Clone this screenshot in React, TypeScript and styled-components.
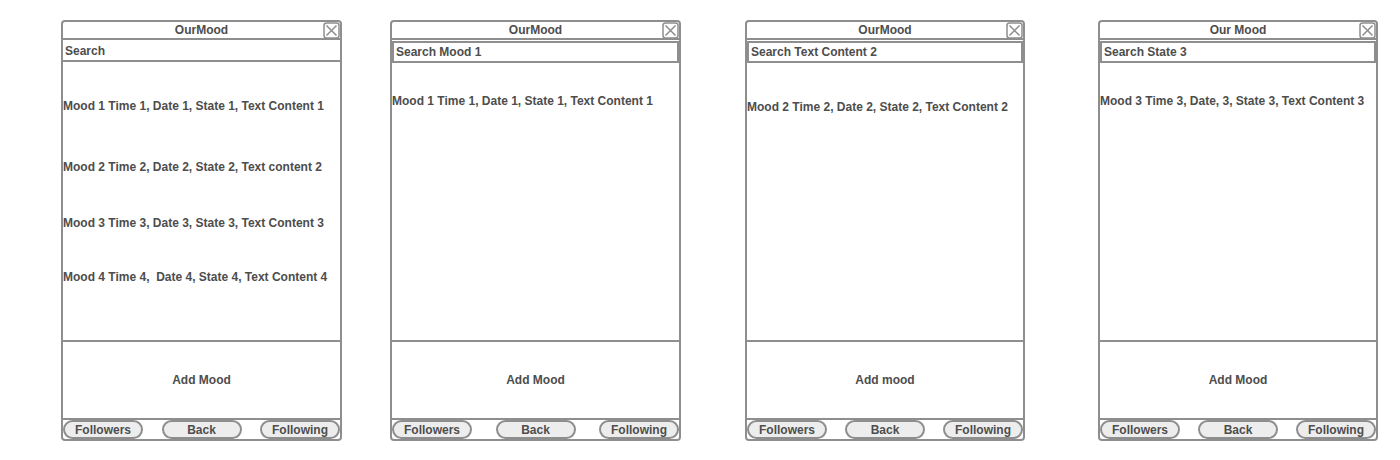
import React from "react";
import styled, { createGlobalStyle } from "styled-components";

const Global = createGlobalStyle`
  html, body { margin: 0; padding: 0; background: #ffffff; }
  body { font-family: "Liberation Sans", Arial, Helvetica, sans-serif; }
`;

const Stage = styled.div`
  display: flex;
  align-items: flex-start;
  padding-top: 20px;
  width: 1400px;
  height: 460px;
  box-sizing: border-box;
`;

const Panel = styled.div<{ $w: number; $ml: number }>`
  width: ${(p) => p.$w}px;
  margin-left: ${(p) => p.$ml}px;
  height: 421px;
  box-sizing: border-box;
  border: 2px solid #8e8e8e;
  border-radius: 4px;
  display: flex;
  flex-direction: column;
  color: #4d4d4d;
  font-size: 12px;
  font-weight: bold;
  overflow: hidden;
`;

const TitleBar = styled.div`
  position: relative;
  height: 16px;
  flex: none;
  display: flex;
  align-items: center;
  justify-content: center;
  border-bottom: 2px solid #8e8e8e;
`;

const Close = styled.svg`
  position: absolute;
  right: 0px;
  top: 0px;
`;

const SearchBar = styled.div<{ $h: number; $boxed?: boolean }>`
  height: ${(p) => p.$h}px;
  flex: none;
  box-sizing: border-box;
  display: flex;
  align-items: center;
  padding-left: 2px;
  ${(p) =>
    p.$boxed
      ? `border: 2px solid #8e8e8e; margin: 1px 0 0 0;`
      : `border-bottom: 2px solid #8e8e8e; padding-top: 1px;`}
`;

const List = styled.div<{ $pt: number }>`
  flex: 1;
  display: flex;
  flex-direction: column;
  padding-top: ${(p) => p.$pt}px;
`;

const Item = styled.div<{ $mt: number }>`
  margin-top: ${(p) => p.$mt}px;
  line-height: 14px;
  white-space: pre;
`;

const AddArea = styled.div`
  height: 80px;
  flex: none;
  box-sizing: border-box;
  border-top: 2px solid #8e8e8e;
  border-bottom: 2px solid #8e8e8e;
  display: flex;
  align-items: center;
  justify-content: center;
`;

const ButtonRow = styled.div`
  height: 19px;
  flex: none;
  display: flex;
  justify-content: space-between;
`;

const PillButton = styled.div`
  width: 80px;
  height: 19px;
  box-sizing: border-box;
  border: 2px solid #8e8e8e;
  border-radius: 10px;
  background: #ededed;
  display: flex;
  align-items: center;
  justify-content: center;
  font-size: 12px;
  font-weight: bold;
  color: #4d4d4d;
`;

const CloseIcon = () => (
  <Close width="17" height="17" viewBox="0 0 17 17">
    <rect x="1" y="1" width="15" height="15" rx="2.5" fill="#fff" stroke="#8e8e8e" strokeWidth="1.5" />
    <path d="M3.5 3.5 L13.5 13.5 M13.5 3.5 L3.5 13.5" stroke="#8e8e8e" strokeWidth="1.5" />
  </Close>
);

type PanelData = {
  w: number;
  ml: number;
  title: string;
  search: string;
  searchH: number;
  boxed: boolean;
  pt: number;
  items: { text: string; mt: number }[];
  add: string;
};

const panels: PanelData[] = [
  {
    w: 281,
    ml: 61,
    title: "OurMood",
    search: "Search",
    searchH: 22,
    boxed: false,
    pt: 37,
    items: [
      { text: "Mood 1 Time 1, Date 1, State 1, Text Content 1", mt: 0 },
      { text: "Mood 2 Time 2, Date 2, State 2, Text content 2", mt: 47 },
      { text: "Mood 3 Time 3, Date 3, State 3, Text Content 3", mt: 42 },
      { text: "Mood 4 Time 4,  Date 4, State 4, Text Content 4", mt: 40 },
    ],
    add: "Add Mood",
  },
  {
    w: 291,
    ml: 48,
    title: "OurMood",
    search: "Search Mood 1",
    searchH: 22,
    boxed: true,
    pt: 31,
    items: [{ text: "Mood 1 Time 1, Date 1, State 1, Text Content 1", mt: 0 }],
    add: "Add Mood",
  },
  {
    w: 280,
    ml: 64,
    title: "OurMood",
    search: "Search Text Content 2",
    searchH: 22,
    boxed: true,
    pt: 37,
    items: [{ text: "Mood 2 Time 2, Date 2, State 2, Text Content 2", mt: 0 }],
    add: "Add mood",
  },
  {
    w: 280,
    ml: 73,
    title: "Our Mood",
    search: "Search State 3",
    searchH: 22,
    boxed: true,
    pt: 31,
    items: [{ text: "Mood 3 Time 3, Date, 3, State 3, Text Content 3", mt: 0 }],
    add: "Add Mood",
  },
];

export default function App() {
  return (
    <>
      <Global />
      <Stage>
        {panels.map((p, i) => (
          <Panel key={i} $w={p.w} $ml={p.ml}>
            <TitleBar>
              {p.title}
              <CloseIcon />
            </TitleBar>
            <SearchBar $h={p.searchH} $boxed={p.boxed}>
              {p.search}
            </SearchBar>
            <List $pt={p.pt}>
              {p.items.map((it, j) => (
                <Item key={j} $mt={it.mt}>
                  {it.text}
                </Item>
              ))}
            </List>
            <AddArea>{p.add}</AddArea>
            <ButtonRow>
              <PillButton>Followers</PillButton>
              <PillButton>Back</PillButton>
              <PillButton>Following</PillButton>
            </ButtonRow>
          </Panel>
        ))}
      </Stage>
    </>
  );
}
